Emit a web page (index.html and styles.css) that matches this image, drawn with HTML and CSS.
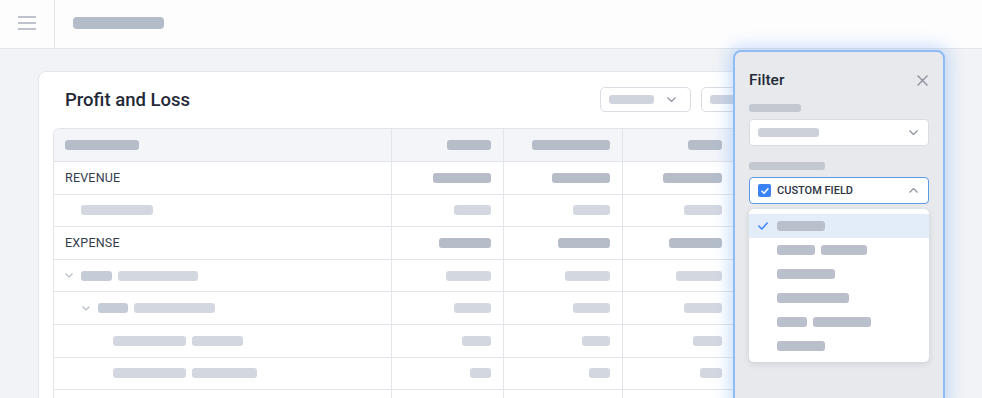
FILE: index.html
```html
<!DOCTYPE html>
<html lang="en">
<head>
<meta charset="utf-8">
<title>Profit and Loss</title>
<link rel="stylesheet" href="styles.css">
</head>
<body>
<header class="topbar">
  <div class="menu-btn">
    <svg width="18" height="14" viewBox="0 0 18 14"><path d="M0 1h18M0 7h18M0 13h18" stroke="#a9b0bd" stroke-width="1.6" fill="none"/></svg>
  </div>
  <div class="topbar-title"><span class="sk sk-top"></span></div>
</header>

<main class="main">
  <section class="card">
    <div class="card-head">
      <h1 class="title">Profit and Loss</h1>
      <div class="controls">
        <div class="ctl ctl-a"><span class="sk sk-ctl"></span>
          <svg class="chev" width="9" height="5" viewBox="0 0 9 5"><path d="M0.5 0.5l4 4 4-4" stroke="#8b929e" stroke-width="1.2" fill="none"/></svg>
        </div>
        <div class="ctl ctl-b"><span class="sk sk-ctl"></span></div>
      </div>
    </div>

    <div class="table">
      <div class="row head">
        <div class="cell"><span class="sk dark" style="width:74px"></span></div>
        <div class="cell num"><span class="sk dark" style="width:44px"></span></div>
        <div class="cell num"><span class="sk dark" style="width:78px"></span></div>
        <div class="cell num"><span class="sk dark" style="width:34px"></span></div>
        <div class="cell num"></div>
      </div>
      <div class="row">
        <div class="cell label">REVENUE</div>
        <div class="cell num"><span class="sk dark" style="width:58px"></span></div>
        <div class="cell num"><span class="sk dark" style="width:58px"></span></div>
        <div class="cell num"><span class="sk dark" style="width:59px"></span></div>
        <div class="cell num"></div>
      </div>
      <div class="row">
        <div class="cell ind1"><span class="sk light" style="width:72px"></span></div>
        <div class="cell num"><span class="sk light" style="width:37px"></span></div>
        <div class="cell num"><span class="sk light" style="width:37px"></span></div>
        <div class="cell num"><span class="sk light" style="width:38px"></span></div>
        <div class="cell num"></div>
      </div>
      <div class="row">
        <div class="cell label">EXPENSE</div>
        <div class="cell num"><span class="sk dark" style="width:52px"></span></div>
        <div class="cell num"><span class="sk dark" style="width:52px"></span></div>
        <div class="cell num"><span class="sk dark" style="width:53px"></span></div>
        <div class="cell num"></div>
      </div>
      <div class="row">
        <div class="cell">
          <svg class="tchev" width="8" height="5" viewBox="0 0 8 5"><path d="M0.5 0.5l3.5 3.5 3.5-3.5" stroke="#b3bac5" stroke-width="1.1" fill="none"/></svg>
          <span class="sk mid" style="width:31px"></span><span class="sk light" style="width:80px"></span>
        </div>
        <div class="cell num"><span class="sk light" style="width:45px"></span></div>
        <div class="cell num"><span class="sk light" style="width:45px"></span></div>
        <div class="cell num"><span class="sk light" style="width:46px"></span></div>
        <div class="cell num"></div>
      </div>
      <div class="row">
        <div class="cell ind1b">
          <svg class="tchev" width="8" height="5" viewBox="0 0 8 5"><path d="M0.5 0.5l3.5 3.5 3.5-3.5" stroke="#b3bac5" stroke-width="1.1" fill="none"/></svg>
          <span class="sk mid" style="width:30px"></span><span class="sk light" style="width:81px"></span>
        </div>
        <div class="cell num"><span class="sk light" style="width:37px"></span></div>
        <div class="cell num"><span class="sk light" style="width:37px"></span></div>
        <div class="cell num"><span class="sk light" style="width:38px"></span></div>
        <div class="cell num"></div>
      </div>
      <div class="row">
        <div class="cell ind2"><span class="sk light" style="width:73px"></span><span class="sk light" style="width:51px"></span></div>
        <div class="cell num"><span class="sk light" style="width:29px"></span></div>
        <div class="cell num"><span class="sk light" style="width:28px"></span></div>
        <div class="cell num"><span class="sk light" style="width:29px"></span></div>
        <div class="cell num"></div>
      </div>
      <div class="row">
        <div class="cell ind2"><span class="sk light" style="width:73px"></span><span class="sk light" style="width:65px"></span></div>
        <div class="cell num"><span class="sk light" style="width:21px"></span></div>
        <div class="cell num"><span class="sk light" style="width:21px"></span></div>
        <div class="cell num"><span class="sk light" style="width:22px"></span></div>
        <div class="cell num"></div>
      </div>
      <div class="row">
        <div class="cell"></div>
        <div class="cell num"></div>
        <div class="cell num"></div>
        <div class="cell num"></div>
        <div class="cell num"></div>
      </div>
    </div>
  </section>
</main>

<aside class="filter">
  <div class="filter-head">
    <h2 class="filter-title">Filter</h2>
    <svg class="close" width="11" height="11" viewBox="0 0 11 11"><path d="M0.5 0.5l10 10M10.5 0.5l-10 10" stroke="#8a909a" stroke-width="1.3" fill="none"/></svg>
  </div>

  <span class="sk flabel" style="width:52px"></span>
  <div class="select">
    <span class="sk light-in" style="width:61px"></span>
    <svg class="chev" width="9" height="5" viewBox="0 0 9 5"><path d="M0.5 0.5l4 4 4-4" stroke="#8b929e" stroke-width="1.2" fill="none"/></svg>
  </div>

  <span class="sk flabel second" style="width:76px"></span>
  <div class="select open">
    <span class="checkbox">
      <svg width="12" height="12" viewBox="0 0 12 12"><path d="M3 6.2l2 2 4-4.4" stroke="#fff" stroke-width="1.5" fill="none" stroke-linecap="round" stroke-linejoin="round"/></svg>
    </span>
    <span class="sel-text">CUSTOM FIELD</span>
    <svg class="chev" width="9" height="5" viewBox="0 0 9 5"><path d="M0.5 4.5l4-4 4 4" stroke="#8b929e" stroke-width="1.2" fill="none"/></svg>
  </div>

  <ul class="menu">
    <li class="item active">
      <svg class="tick" width="10" height="8" viewBox="0 0 10 8"><path d="M0.8 4l3 3 5.4-6" stroke="#3b82f6" stroke-width="1.5" fill="none" stroke-linecap="round" stroke-linejoin="round"/></svg>
      <span class="sk opt" style="width:48px"></span>
    </li>
    <li class="item"><span class="sk opt" style="width:38px"></span><span class="sk opt" style="width:46px"></span></li>
    <li class="item"><span class="sk opt" style="width:58px"></span></li>
    <li class="item"><span class="sk opt" style="width:72px"></span></li>
    <li class="item"><span class="sk opt" style="width:30px"></span><span class="sk opt" style="width:58px"></span></li>
    <li class="item"><span class="sk opt" style="width:48px"></span></li>
  </ul>
</aside>
</body>
</html>
```

FILE: styles.css
```css
* { box-sizing: border-box; }

html, body {
  margin: 0;
  height: 100%;
  overflow: hidden;
}

body {
  background: #f1f3f6;
  font-family: Roboto, "Noto Sans", sans-serif;
  color: #1f2937;
  position: relative;
}

.sk {
  display: inline-block;
  height: 10px;
  border-radius: 3px;
  background: #b7bdc9;
  vertical-align: middle;
  flex: none;
}

.topbar {
  height: 49px;
  background: #fdfdfe;
  border-bottom: 1px solid #e2e5ea;
  display: flex;
  align-items: stretch;
}

.menu-btn {
  width: 55px;
  border-right: 1px solid #dfe2e7;
  display: flex;
  align-items: center;
  padding-left: 18px;
  padding-bottom: 2px;
}

.topbar-title {
  display: flex;
  align-items: center;
  padding-left: 18px;
  padding-bottom: 2px;
}

.sk-top {
  width: 91px;
  height: 12px;
  border-radius: 4px;
  background: #b4bbc9;
}

.main {
  padding: 22px 46px 0 38px;
}

.card {
  background: #fff;
  border: 1px solid #e3e6eb;
  border-radius: 8px;
  padding: 0 0 0 14px;
  height: 360px;
  overflow: hidden;
}

.card-head {
  display: flex;
  align-items: center;
  padding: 15px 0 16px 12px;
}

.title {
  margin: 0;
  font-size: 18.5px;
  font-weight: 500;
  line-height: 24px;
  color: #1f2937;
  width: 535px;
  flex: none;
}

.controls {
  display: flex;
  gap: 10px;
}

.ctl {
  height: 25px;
  border: 1px solid #d9dce2;
  border-radius: 5px;
  display: flex;
  align-items: center;
  padding: 0 14px 0 8px;
  background: #fff;
  flex: none;
}

.ctl-a { width: 91px; justify-content: space-between; }
.ctl-b { width: 120px; }

.sk-ctl {
  width: 45px;
  height: 9px;
  background: #cfd4dd;
}

.table {
  border: 1px solid #e1e4e9;
  border-right: none;
  border-radius: 6px 0 0 0;
  overflow: hidden;
}

.row {
  display: grid;
  grid-template-columns: 338px 112px 119px 112px 1fr;
  height: 32.6px;
  border-bottom: 1px solid #e1e4e9;
}

.row.head {
  height: 33px;
  background: #f3f5f8;
}

.cell {
  border-right: 1px solid #e1e4e9;
  display: flex;
  align-items: center;
  gap: 6px;
  padding: 0 12px 0 11px;
}

.cell.num {
  justify-content: flex-end;
}

.label {
  font-size: 12.5px;
  font-weight: 400;
  color: #343d4d;
  letter-spacing: 0.2px;
}

.ind1 { padding-left: 27px; }
.ind1b { padding-left: 28px; }
.ind2 { padding-left: 59px; }

.tchev {
  margin-right: 2px;
}

.sk.dark { background: #b6bdc9; }
.sk.light { background: #d3d8e0; }
.sk.mid { background: #c6ccd7; }

/* Filter panel (overlay) */
.filter {
  position: absolute;
  left: 733px;
  top: 50px;
  width: 212px;
  bottom: -12px;
  background: #e7e9ec;
  border: 2px solid #8fbcf4;
  border-radius: 8px;
  box-shadow: 0 0 16px 4px rgba(96, 160, 245, 0.32);
  padding: 16px 14px 0 14px;
  display: flex;
  flex-direction: column;
  align-items: flex-start;
}

.filter-head {
  width: 100%;
  display: flex;
  align-items: center;
  justify-content: space-between;
  height: 24px;
  padding-right: 1px;
}

.filter-title {
  margin: 0;
  font-size: 15.5px;
  font-weight: 500;
  color: #1f2937;
}

.flabel {
  margin-top: 12px;
  height: 8px;
  background: #c3c8d1;
}

.flabel.second { margin-top: 16px; }

.select {
  width: 180px;
  height: 27px;
  margin-top: 7px;
  background: #fff;
  border: 1px solid #d9dce2;
  border-radius: 4px;
  display: flex;
  align-items: center;
  padding: 0 10px 0 8px;
}

.select .chev { margin-left: auto; }

.light-in {
  height: 9px;
  background: #cdd2da;
}

.select.open {
  border-color: #5a9ae6;
  margin-top: 7px;
}

.checkbox {
  width: 13px;
  height: 13px;
  border-radius: 2px;
  background: #3b82f6;
  display: inline-flex;
  align-items: center;
  justify-content: center;
}

.sel-text {
  margin-left: 6px;
  font-size: 11px;
  font-weight: 500;
  color: #2c3442;
}

.menu {
  list-style: none;
  margin: 5px 0 0 0;
  padding: 5px 0 4px 0;
  width: 180px;
  background: #fff;
  border-radius: 5px;
  box-shadow: 0 2px 6px rgba(30, 40, 60, 0.12);
}

.item {
  height: 24px;
  display: flex;
  align-items: center;
  gap: 6px;
  padding-left: 28px;
}

.item.active {
  background: #e3edfa;
  padding-left: 9px;
}

.item .tick { margin-right: 3px; }

.sk.opt {
  height: 10px;
  background: #b9c0cc;
}
```
